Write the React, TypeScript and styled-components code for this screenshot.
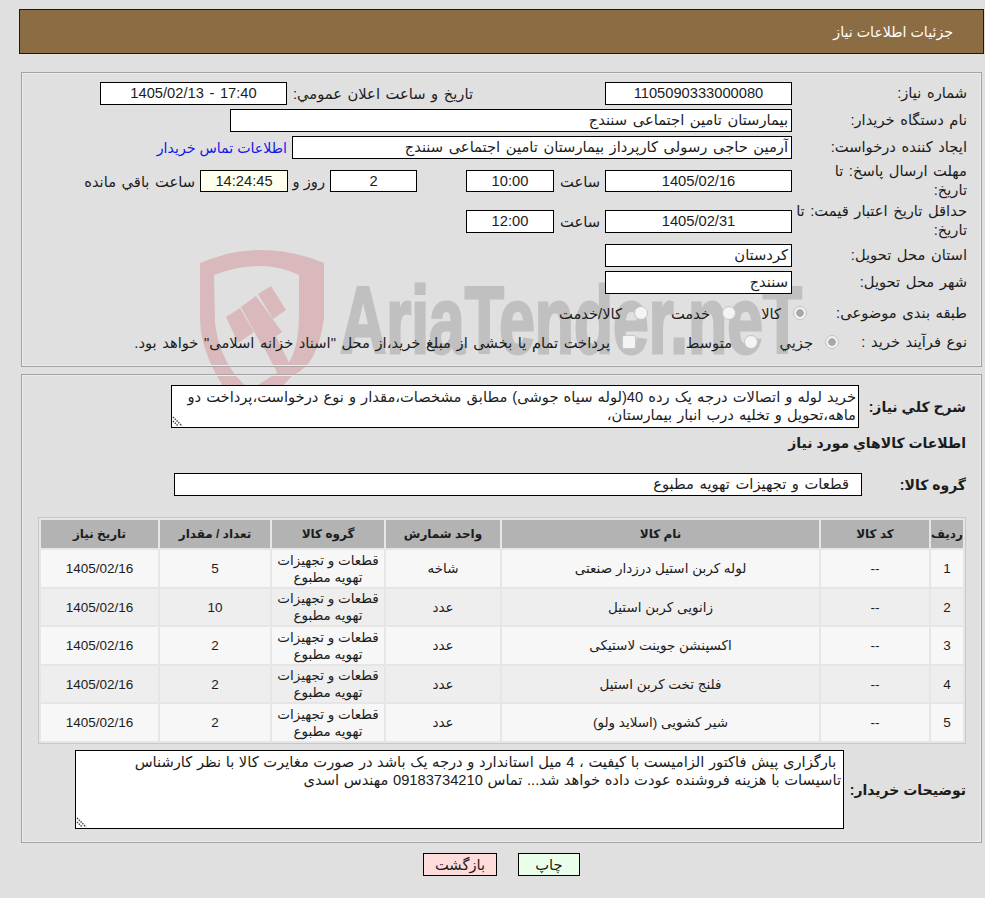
import React from "react";
import styled, { createGlobalStyle } from "styled-components";

const Global = createGlobalStyle`
  html, body { margin: 0; padding: 0; background: #e0e0e0; }
  body { font-family: "Liberation Sans", "DejaVu Sans", sans-serif; font-size: 14.7px; word-spacing: 1.5px; color: #1c1c1c; }
`;

const Page = styled.div`
  position: relative;
  width: 985px;
  height: 898px;
  overflow: hidden;
  direction: rtl;
  display: flex;
  flex-direction: column;
  box-sizing: border-box;
  padding-top: 9px;
`;

const Watermark = styled.svg`
  position: absolute;
  left: 190px;
  top: 240px;
  width: 640px;
  height: 160px;
`;

const Header = styled.div`
  position: relative;
  box-sizing: border-box;
  margin: 0 1px 0 19px;
  height: 45px;
  background: #8c6c42;
  border: 1px solid #1a1a1a;
  color: #fff;
  display: flex;
  align-items: center;
  padding-right: 30px;
  font-size: 14.2px;
  word-spacing: 0;
`;

const Panel = styled.div<{ $mt: number; $h: number }>`
  position: relative;
  box-sizing: border-box;
  margin: ${(p) => p.$mt}px 3px 0 21px;
  height: ${(p) => p.$h}px;
  border: 1px solid #a3a3a3;
  box-shadow: inset 0 0 0 1px #ececec;
`;

const InfoBody = styled.div`
  display: flex;
  flex-direction: column;
  padding: 9px 14px 0 0;
`;

const Row = styled.div<{ $h: number; $mt?: number }>`
  display: flex;
  align-items: center;
  height: ${(p) => p.$h}px;
  margin-top: ${(p) => p.$mt ?? 0}px;
`;

const Label = styled.div<{ $w?: number }>`
  width: ${(p) => p.$w ?? 175}px;
  flex: none;
  line-height: 19px;
  white-space: nowrap;
`;

const Field = styled.div<{ $w: number; $center?: boolean; $bg?: string; $h?: number; $mr?: number; $pr?: number }>`
  position: relative;
  box-sizing: border-box;
  flex: none;
  width: ${(p) => p.$w}px;
  height: ${(p) => p.$h ?? 23}px;
  line-height: ${(p) => (p.$h ?? 23) - 2}px;
  border: 1px solid #000;
  background: ${(p) => p.$bg ?? "#fff"};
  text-align: ${(p) => (p.$center ? "center" : "right")};
  margin-right: ${(p) => p.$mr ?? 0}px;
  padding: 0 ${(p) => p.$pr ?? 3}px 0 3px;
  white-space: nowrap;
  overflow: hidden;
`;

const Note = styled.span<{ $w?: number; $mr?: number; $tight?: boolean }>`
  position: relative;
  flex: none;
  white-space: nowrap;
  width: ${(p) => (p.$w ? `${p.$w}px` : "auto")};
  margin-right: ${(p) => p.$mr ?? 0}px;
  word-spacing: ${(p) => (p.$tight ? "0" : "inherit")};
`;

const ContactLink = styled.a`
  position: relative;
  color: #1616e8;
  margin-right: 5px;
  white-space: nowrap;
  text-decoration: none;
  font-size: 14.2px;
  word-spacing: 0;
`;

const Option = styled.label<{ $w: number }>`
  position: relative;
  flex: none;
  display: flex;
  align-items: center;
  width: ${(p) => p.$w}px;
  white-space: nowrap;
  gap: 12px;
`;

const Radio = styled.span<{ $on?: boolean }>`
  flex: none;
  box-sizing: border-box;
  width: 14px;
  height: 14px;
  border-radius: 50%;
  border: 1px solid #c4c4c4;
  background: ${(p) =>
    p.$on ? "radial-gradient(circle, #a8a8a8 0 3.5px, #f2f2f2 4px)" : "#f4f4f4"};
`;

const Check = styled.span`
  flex: none;
  box-sizing: border-box;
  width: 14px;
  height: 14px;
  border-radius: 2px;
  border: 1px solid #c8c8c8;
  background: #f4f4f4;
`;

const SummaryBody = styled.div`
  display: flex;
  flex-direction: column;
  padding: 10px 15px 0 16px;
`;

const BoldLabel = styled.div<{ $w: number }>`
  width: ${(p) => p.$w}px;
  flex: none;
  font-weight: 700;
  font-size: 14px;
  word-spacing: 0;
  white-space: nowrap;
`;

const Heading = styled.div`
  height: 30px;
  line-height: 30px;
  font-weight: 700;
  font-size: 14px;
  word-spacing: 0;
`;

const AreaBox = styled.div<{ $w: number; $h: number }>`
  position: relative;
  flex: none;
  width: ${(p) => p.$w}px;
  height: ${(p) => p.$h}px;
`;

const Area = styled.textarea<{ $ws: number }>`
  box-sizing: border-box;
  display: block;
  width: 100%;
  height: 100%;
  border: 1px solid #000;
  border-radius: 0;
  background: #fff;
  color: #1c1c1c;
  font: inherit;
  word-spacing: ${(p) => p.$ws}px;
  line-height: 18px;
  padding: 2px 2px 2px 1px;
  direction: rtl;
  outline: none;
  overflow: hidden;
  resize: none;
`;

const Grip = styled.svg`
  position: absolute;
  left: 1px;
  bottom: 1px;
  width: 11px;
  height: 11px;
`;

const TableFrame = styled.div`
  position: relative;
  border: 1px solid #c8c8c8;
  background: #e6e6e6;
  margin-top: 21px;
`;

const Grid = styled.table`
  border-collapse: separate;
  border-spacing: 2px;
  table-layout: fixed;
  width: 100%;
  font-size: 13.5px;
  word-spacing: 0;
`;

const HeadCell = styled.th`
  height: 28px;
  padding: 0;
  background: #b3b3b3;
  font-weight: 700;
  font-size: 12px;
  text-align: center;
`;

const BodyRow = styled.tr<{ $alt: boolean }>`
  height: ${(p) => (p.$alt ? 36 : 37)}px;
  background: ${(p) => (p.$alt ? "#eeeeee" : "#f7f7f7")};
`;

const Cell = styled.td`
  padding: 0;
  text-align: center;
  line-height: 17px;
`;

const Actions = styled.div`
  display: flex;
  justify-content: center;
  gap: 21px;
  margin-top: 10px;
  padding-left: 18px;
`;

const ActionButton = styled.button<{ $bg: string; $w: number }>`
  position: relative;
  box-sizing: border-box;
  width: ${(p) => p.$w}px;
  height: 23px;
  padding: 0;
  border: 1px solid #000;
  border-radius: 0;
  background: ${(p) => p.$bg};
  color: #1c1c1c;
  font: inherit;
`;

const rows = [
  { id: 1, name: "لوله کربن استیل درزدار صنعتی", unit: "شاخه", qty: "5" },
  { id: 2, name: "زانویی کربن استیل", unit: "عدد", qty: "10" },
  { id: 3, name: "اکسپنشن جوینت لاستیکی", unit: "عدد", qty: "2" },
  { id: 4, name: "فلنج تخت کربن استیل", unit: "عدد", qty: "2" },
  { id: 5, name: "شیر کشویی (اسلاید ولو)", unit: "عدد", qty: "2" },
];

const cols = [
  { t: "ردیف", w: 32 },
  { t: "کد کالا", w: 108 },
  { t: "نام کالا", w: 317 },
  { t: "واحد شمارش", w: 114 },
  { t: "گروه کالا", w: 112 },
  { t: "تعداد / مقدار", w: 110 },
  { t: "تاریخ نیاز", w: 117 },
];

const ResizeGrip = () => (
  <Grip viewBox="0 0 11 11">
    <path d="M1 1 L10 10 M1 5 L6 10" stroke="#444" strokeWidth="1.4" strokeDasharray="1.5 1" fill="none" />
  </Grip>
);

export default function App() {
  return (
    <Page>
      <Global />
      <Watermark viewBox="0 0 640 160">
        <g fill="#d9b9bb">
          <path
            fillRule="evenodd"
            d="M10 23 Q72 -3 134 23 L134 78 Q128 125 103 135 L70 170 L50 170 Q10 120 10 78 Z M24 35 L25 83 Q30 125 60 150 L85 134 Q108 125 109 78 L109 35 Q72 17 24 35 Z"
          />
          <path d="M36 77 L50 68 L64 92 L48 103 Z" />
          <path d="M51 67 L66 56 L92 92 L72 106 Z" />
          <path d="M68 54 L81 46 L96 70 L83 79 Z" />
          <path d="M70 100 L84 92 L105 135 L90 138 Z" />
        </g>
        <text
          x="150"
          y="113"
          fontFamily="Liberation Sans, sans-serif"
          fontWeight="700"
          fontSize="94"
          fill="#c0c0c0"
          stroke="#c0c0c0"
          strokeWidth="3"
          textLength="462"
          lengthAdjust="spacingAndGlyphs"
          direction="ltr"
        >
          AriaTender.neT
        </text>
      </Watermark>

      <Header>جزئیات اطلاعات نیاز</Header>

      <Panel $mt={18} $h={295}>
        <InfoBody>
          <Row $h={23}>
            <Label>شماره نیاز:</Label>
            <Field $w={187} $center>1105090333000080</Field>
            <Note $mr={132} $w={186}>تاریخ و ساعت اعلان عمومي:</Note>
            <Field $w={187} $center>17:40 - 1405/02/13</Field>
          </Row>
          <Row $h={23} $mt={4}>
            <Label>نام دستگاه خریدار:</Label>
            <Field $w={562}>بیمارستان تامین اجتماعی سنندج</Field>
          </Row>
          <Row $h={23} $mt={4}>
            <Label>ایجاد کننده درخواست:</Label>
            <Field $w={500}>آرمین حاجی رسولی کارپرداز بیمارستان تامین اجتماعی سنندج</Field>
            <ContactLink>اطلاعات تماس خریدار</ContactLink>
          </Row>
          <Row $h={40} $mt={2}>
            <Label>مهلت ارسال پاسخ: تا<br />تاریخ:</Label>
            <Field $w={187} $h={22} $center>1405/02/16</Field>
            <Note $mr={5} $w={46}>ساعت</Note>
            <Field $w={88} $h={22} $center>10:00</Field>
            <Field $w={87} $h={22} $center $mr={49}>2</Field>
            <Note $mr={5} $w={37} $tight>روز و</Note>
            <Field $w={88} $h={22} $center $bg="#ffffee">14:24:45</Field>
            <Note $mr={5}>ساعت باقي مانده</Note>
          </Row>
          <Row $h={40}>
            <Label>حداقل تاریخ اعتبار قیمت: تا<br />تاریخ:</Label>
            <Field $w={187} $center>1405/02/31</Field>
            <Note $mr={5} $w={46}>ساعت</Note>
            <Field $w={88} $center>12:00</Field>
          </Row>
          <Row $h={23} $mt={3}>
            <Label>استان محل تحویل:</Label>
            <Field $w={187}>کردستان</Field>
          </Row>
          <Row $h={23} $mt={4}>
            <Label>شهر محل تحویل:</Label>
            <Field $w={187}>سنندج</Field>
          </Row>
          <Row $h={30} $mt={4}>
            <Label $w={160}>طبقه بندی موضوعی:</Label>
            <Option $w={71}><Radio $on />کالا</Option>
            <Option $w={88}><Radio />خدمت</Option>
            <Option $w={100}><Radio />کالا/خدمت</Option>
          </Row>
          <Row $h={28}>
            <Label $w={128}>نوع فرآیند خرید :</Label>
            <Option $w={81}><Radio $on />جزيي</Option>
            <Option $w={122}><Radio />متوسط</Option>
            <Option $w={500}><Check />پرداخت تمام یا بخشی از مبلغ خرید،از محل "اسناد خزانه اسلامی" خواهد بود.</Option>
          </Row>
        </InfoBody>
      </Panel>

      <Panel $mt={7} $h={469}>
        <SummaryBody>
          <Row $h={43}>
            <BoldLabel $w={107}>شرح کلي نیاز:</BoldLabel>
            <AreaBox $w={688} $h={43}>
              <Area
                $ws={1}
                readOnly
                defaultValue="خرید لوله و اتصالات درجه یک رده 40(لوله سیاه جوشی) مطابق مشخصات،مقدار و نوع درخواست،پرداخت دو ماهه،تحویل و تخلیه درب انبار بیمارستان،"
              />
              <ResizeGrip />
            </AreaBox>
          </Row>
          <Heading>اطلاعات کالاهاي مورد نیاز</Heading>
          <Row $h={23} $mt={15}>
            <BoldLabel $w={104}>گروه کالا:</BoldLabel>
            <Field $w={688} $pr={12}>قطعات و تجهیزات تهویه مطبوع</Field>
          </Row>
          <TableFrame>
            <Grid>
              <colgroup>
                {cols.map((c) => (
                  <col key={c.t} style={{ width: c.w }} />
                ))}
              </colgroup>
              <thead>
                <tr>
                  {cols.map((c) => (
                    <HeadCell key={c.t}>{c.t}</HeadCell>
                  ))}
                </tr>
              </thead>
              <tbody>
                {rows.map((r, i) => (
                  <BodyRow key={r.id} $alt={i % 2 === 1}>
                    <Cell>{r.id}</Cell>
                    <Cell>--</Cell>
                    <Cell>{r.name}</Cell>
                    <Cell>{r.unit}</Cell>
                    <Cell>قطعات و تجهیزات تهویه مطبوع</Cell>
                    <Cell>{r.qty}</Cell>
                    <Cell>1405/02/16</Cell>
                  </BodyRow>
                ))}
              </tbody>
            </Grid>
          </TableFrame>
          <Row $h={79} $mt={6}>
            <BoldLabel $w={122}>توضیحات خریدار:</BoldLabel>
            <AreaBox $w={769} $h={79}>
              <Area
                $ws={0.5}
                readOnly
                defaultValue=" بارگزاری پیش فاکتور الزامیست با کیفیت ، 4 میل استاندارد و درجه یک باشد در صورت مغایرت کالا با نظر کارشناس تاسیسات با هزینه فروشنده عودت داده خواهد شد... تماس 09183734210 مهندس اسدی"
              />
              <ResizeGrip />
            </AreaBox>
          </Row>
        </SummaryBody>
      </Panel>

      <Actions>
        <ActionButton $bg="#eaffea" $w={62}>چاپ</ActionButton>
        <ActionButton $bg="#ffdcdc" $w={74}>بازگشت</ActionButton>
      </Actions>
    </Page>
  );
}
